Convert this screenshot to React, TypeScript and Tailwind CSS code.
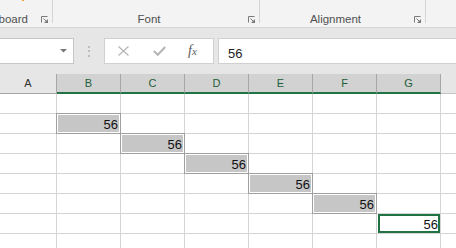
import React from 'react';

const COLS = ['B', 'C', 'D', 'E', 'F', 'G'];
const ROW_COUNT = 8;

// little "dialog launcher" glyph in the ribbon group corners
const Launcher = () => (
  <svg width="7" height="7" viewBox="0 0 7 7" className="block">
    <path d="M0.5 6.5 V0.5 H6.5" fill="none" stroke="#7a7a7a" strokeWidth="1" />
    <path d="M2.5 2.5 L5.5 5.5" stroke="#7a7a7a" strokeWidth="1" />
    <path d="M3 7 H7 V3 Z" fill="#7a7a7a" />
  </svg>
);

interface GroupProps {
  label: string;
  width: number | null;
  align?: 'center' | 'end';
}

const RibbonGroup: React.FC<GroupProps> = ({ label, width, align = 'center' }) => (
  <div className={`flex h-full shrink-0 ${width === null ? 'flex-1' : ''}`} style={width !== null ? { width } : undefined}>
    <div className={`flex-1 min-w-0 flex pt-[12px] ${align === 'end' ? 'justify-end pr-[10px]' : 'justify-center'}`}>
      <span className="shrink-0 whitespace-nowrap text-[11.5px] leading-[14px] text-[#505050]">{label}</span>
    </div>
    <div className="w-[14px] shrink-0 pl-[3px] pt-[16px]">
      <Launcher />
    </div>
  </div>
);

const Sep = () => <div className="w-px h-[23px] bg-[#d5d5d5] shrink-0" />;

const App: React.FC = () => {
  return (
    <div className="w-[456px] h-[248px] overflow-hidden bg-white font-['Liberation_Sans',Arial,sans-serif] select-none">
      {/* ribbon group labels */}
      <div className="relative h-[28px] bg-[#f3f3f3] border-b border-[#d5d5d5] flex overflow-hidden">
        <div className="absolute left-[22px] top-0 w-[2px] h-[1px] bg-[#f0a030]" />
        <RibbonGroup label="Clipboard" width={52} align="end" />
        <Sep />
        <RibbonGroup label="Font" width={206} />
        <Sep />
        <RibbonGroup label="Alignment" width={165} />
        <Sep />
        <div className="flex-1" />
      </div>

      {/* formula bar */}
      <div className="h-[46px] bg-[#e6e6e6] pt-[10px] flex items-start">
        <div className="w-[74px] h-[26px] bg-white border border-l-0 border-[#c6c6c6] flex items-center justify-end pr-[6px]">
          <svg width="7" height="4" viewBox="0 0 7 4">
            <polygon points="0,0 7,0 3.5,3.5" fill="#777" />
          </svg>
        </div>
        <div className="w-[30px] h-[26px] flex flex-col items-center justify-center gap-[2.5px]">
          <span className="w-[2px] h-[2px] bg-[#bdbdbd]" />
          <span className="w-[2px] h-[2px] bg-[#bdbdbd]" />
          <span className="w-[2px] h-[2px] bg-[#bdbdbd]" />
        </div>
        <div className="w-[110px] h-[26px] bg-white border border-[#d0d0d0] flex items-center pl-[13px]">
          <svg width="11" height="10" viewBox="0 0 11 10">
            <path d="M0.5 0.5 L10.5 9.5 M10.5 0.5 L0.5 9.5" stroke="#b4b4b4" strokeWidth="1.2" />
          </svg>
          <svg width="13" height="10" viewBox="0 0 13 10" className="ml-[24px]">
            <polyline points="0.8,5 4.8,8.8 12.2,1" fill="none" stroke="#b4b4b4" strokeWidth="2" />
          </svg>
          <span className="ml-[22px] font-['Liberation_Serif',serif] italic text-[14px] leading-none text-[#5a5a5a]">
            f<span className="text-[11px]">x</span>
          </span>
        </div>
        <div className="ml-[4px] flex-1 h-[26px] bg-white border border-r-0 border-[#d0d0d0] pl-[9px] pt-[2px]">
          <span className="text-[13px] leading-[22px] text-[#222]">56</span>
        </div>
      </div>

      {/* column headers */}
      <div className="flex h-[20px]">
        <div className="w-[57px] bg-[#e6e6e6] border-r border-b border-[#a6a6a6] text-center text-[11px] leading-[18px] text-[#333]">
          A
        </div>
        {COLS.map((c) => (
          <div
            key={c}
            className="w-[64px] bg-[#d2d2d2] border-r border-[#a6a6a6] border-b-2 border-b-[#217346] text-center text-[11px] leading-[18px] text-[#1d5e3a]"
          >
            {c}
          </div>
        ))}
        <div className="flex-1 bg-[#e6e6e6] border-b border-[#c6c6c6]" />
      </div>

      {/* grid */}
      {Array.from({ length: ROW_COUNT }).map((_, r) => (
        <div key={r} className="flex h-[20px]">
          <div className="w-[57px] border-r border-b border-[#d4d4d4]" />
          {COLS.map((c, ci) => {
            const shaded = r >= 1 && r <= 5 && ci === r - 1;
            const active = r === 6 && ci === 5;
            return (
              <div key={c} className="relative w-[64px] border-r border-b border-[#d4d4d4]">
                {shaded && (
                  <div className="absolute -left-px -top-px -right-px -bottom-px border border-[#a0a0a0] p-px bg-white">
                    <div className="w-full h-full bg-[#c6c6c6]" />
                  </div>
                )}
                {active && <div className="absolute left-[1px] top-0 right-0 bottom-0 border-2 border-[#217346]" />}
                {(shaded || active) && (
                  <div className="relative text-right pr-[2px] text-[13px] leading-[21px] text-[#111]">56</div>
                )}
              </div>
            );
          })}
          <div className="flex-1 border-b border-[#d4d4d4]" />
        </div>
      ))}
    </div>
  );
};

export default App;
